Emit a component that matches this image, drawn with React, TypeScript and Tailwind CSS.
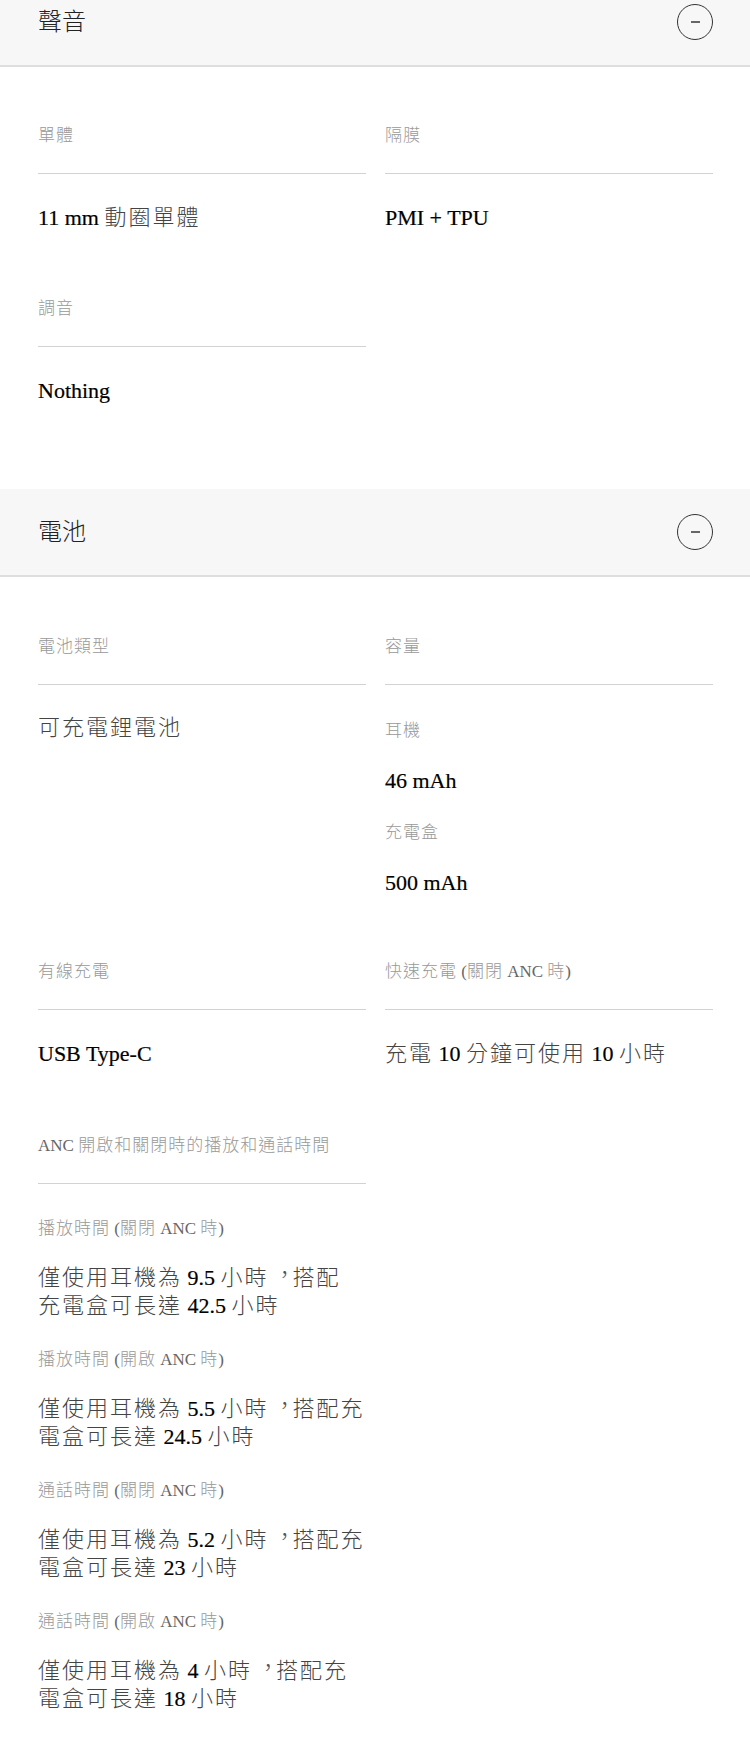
import React from "react";

const LABEL = "text-[17px] leading-[24px] text-[#999999]";
const VALUE = "text-[22px] leading-[28px] text-[#333333]";

const CJK_RE = /([\u3000-\u9fff\uff00-\uffef]+)/;

function CjkRun({ text }: { text: string }) {
  const bits = text.split(/(，)/).filter((b) => b.length > 0);
  return (
    <>
      {bits.map((b, j) =>
        b === "，" ? (
          <span key={j} className="inline-block tracking-[2px] text-[#555555] translate-x-[5px] -translate-y-[3px]">
            ，
          </span>
        ) : (
          <span key={j} className="tracking-[2px] text-[#444444]">
            {b}
          </span>
        )
      )}
    </>
  );
}

function Mixed({ text, kind }: { text: string; kind: "label" | "value" }) {
  const parts = text.split(CJK_RE).filter((p) => p.length > 0);
  return (
    <>
      {parts.map((p, i) => {
        const isCjk = CJK_RE.test(p);
        if (kind === "label") {
          return (
            <span key={i} className={isCjk ? "tracking-[1px] text-[#999999]" : "tracking-normal text-[#666666]"}>
              {p}
            </span>
          );
        }
        if (isCjk) return <CjkRun key={i} text={p} />;
        return (
          <span key={i} className="tracking-normal text-[#000000] [-webkit-text-stroke:0.2px_#000000]">
            {p}
          </span>
        );
      })}
    </>
  );
}

function MinusCircle() {
  return (
    <div className="w-[36px] h-[36px] rounded-full border-[1.5px] border-[#333333] flex items-center justify-center">
      <div className="w-[9px] h-[2px] bg-[#666666]" />
    </div>
  );
}

function Label({ text, className = "" }: { text: string; className?: string }) {
  return (
    <div className={`${LABEL} ${className}`}>
      <Mixed text={text} kind="label" />
    </div>
  );
}

function Value({ lines, className = "" }: { lines: string[]; className?: string }) {
  return (
    <div className={`${VALUE} ${className}`}>
      {lines.map((l, i) => (
        <div key={i} className="whitespace-nowrap">
          <Mixed text={l} kind="value" />
        </div>
      ))}
    </div>
  );
}

function Item({ label, children, className = "" }: { label: string; children?: React.ReactNode; className?: string }) {
  return (
    <div className={className}>
      <Label text={label} className="pb-[25px] border-b border-[#d2d2d2]" />
      {children}
    </div>
  );
}

export default function App() {
  return (
    <div
      lang="zh-Hant-TW"
      className="w-[750px] bg-white font-['Liberation_Serif','Noto_Sans_CJK_TC',serif] font-light"
    >
      {/* Sound header (scrolled, top cut) */}
      <div className="h-[67px] pb-[21px] bg-[#f7f7f7] border-b-2 border-[#dedede] pl-[38px] pr-[37px] flex items-center justify-between">
        <div className="text-[24px] leading-[30px] text-[#222222]">聲音</div>
        <MinusCircle />
      </div>

      <div className="pl-[38px] pr-[37px] pt-[57px] pb-[84px]">
        <div className="grid grid-cols-2 gap-x-[19px] gap-y-[65px] items-start">
          <Item label="單體">
            <Value lines={["11 mm 動圈單體"]} className="mt-[30px]" />
          </Item>
          <Item label="隔膜">
            <Value lines={["PMI + TPU"]} className="mt-[30px]" />
          </Item>
          <Item label="調音">
            <Value lines={["Nothing"]} className="mt-[30px]" />
          </Item>
        </div>
      </div>

      {/* Battery header */}
      <div className="h-[88px] bg-[#f7f7f7] border-b-2 border-[#dedede] pl-[38px] pr-[37px] flex items-center justify-between">
        <div className="text-[24px] leading-[30px] text-[#222222]">電池</div>
        <MinusCircle />
      </div>

      <div className="pl-[38px] pr-[37px] pt-[58px] pb-[46px]">
        <div className="grid grid-cols-2 gap-x-[19px] gap-y-[63px] items-start">
          <Item label="電池類型">
            <Value lines={["可充電鋰電池"]} className="mt-[29px]" />
          </Item>
          <Item label="容量">
            <Label text="耳機" className="mt-[34px]" />
            <Value lines={["46 mAh"]} className="mt-[24px]" />
            <Label text="充電盒" className="mt-[26px]" />
            <Value lines={["500 mAh"]} className="mt-[24px]" />
          </Item>
          <Item label="有線充電">
            <Value lines={["USB Type-C"]} className="mt-[30px]" />
          </Item>
          <Item label="快速充電 (關閉 ANC 時)">
            <Value lines={["充電 10 分鐘可使用 10 小時"]} className="mt-[30px]" />
          </Item>
          <Item label="ANC 開啟和關閉時的播放和通話時間" className="mt-[3px]">
            <Label text="播放時間 (關閉 ANC 時)" className="mt-[33px]" />
            <Value lines={["僅使用耳機為 9.5 小時，搭配", "充電盒可長達 42.5 小時"]} className="mt-[23px]" />
            <Label text="播放時間 (開啟 ANC 時)" className="mt-[28px]" />
            <Value lines={["僅使用耳機為 5.5 小時，搭配充", "電盒可長達 24.5 小時"]} className="mt-[23px]" />
            <Label text="通話時間 (關閉 ANC 時)" className="mt-[28px]" />
            <Value lines={["僅使用耳機為 5.2 小時，搭配充", "電盒可長達 23 小時"]} className="mt-[23px]" />
            <Label text="通話時間 (開啟 ANC 時)" className="mt-[28px]" />
            <Value lines={["僅使用耳機為 4 小時，搭配充", "電盒可長達 18 小時"]} className="mt-[23px]" />
          </Item>
        </div>
      </div>
    </div>
  );
}
